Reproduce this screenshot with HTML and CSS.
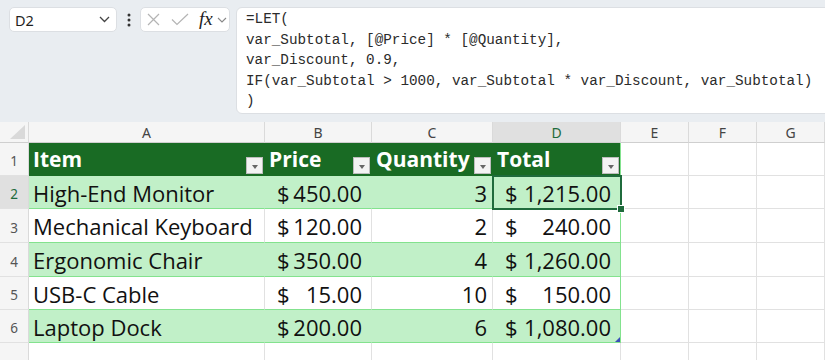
FILE: index.html
```html
<!DOCTYPE html>
<html>
<head>
<meta charset="utf-8">
<link rel="stylesheet" href="styles.css">
</head>
<body>
<div class="app">
  <div class="toolbar">
    <div class="namebox">
      <span class="nb-text">D2</span>
      <svg class="chev" width="11" height="7" viewBox="0 0 11 7"><polyline points="1,1 5.5,5.5 10,1" fill="none" stroke="#444" stroke-width="1.3"/></svg>
    </div>
    <div class="dots">
      <svg width="4" height="14" viewBox="0 0 4 14"><circle cx="2" cy="2" r="1.5" fill="#333"/><circle cx="2" cy="7" r="1.5" fill="#333"/><circle cx="2" cy="12" r="1.5" fill="#333"/></svg>
    </div>
    <div class="fxbox">
      <svg class="ic-x" width="13" height="13" viewBox="0 0 13 13"><path d="M1 1 L12 12 M12 1 L1 12" stroke="#b4b4b4" stroke-width="1.2" fill="none"/></svg>
      <svg class="ic-check" width="18" height="13" viewBox="0 0 18 13"><polyline points="1,6.5 6,11.5 17,1" fill="none" stroke="#b4b4b4" stroke-width="1.2"/></svg>
      <span class="fx">fx</span>
      <svg class="chev-s" width="10" height="6" viewBox="0 0 10 6"><polyline points="1,1 5,5 9,1" fill="none" stroke="#888" stroke-width="1.1"/></svg>
    </div>
    <div class="formula"><pre class="ftext">=LET(
var_Subtotal, [@Price] * [@Quantity],
var_Discount, 0.9,
IF(var_Subtotal &gt; 1000, var_Subtotal * var_Discount, var_Subtotal)
)</pre></div>
  </div>

  <div class="sheet">
    <div class="c corner"><svg width="15" height="14" viewBox="0 0 15 14"><polygon points="15,0 15,14 0,14" fill="#d9d9d9"/></svg></div>
    <div class="c ch">A</div>
    <div class="c ch">B</div>
    <div class="c ch">C</div>
    <div class="c ch sel">D</div>
    <div class="c ch">E</div>
    <div class="c ch">F</div>
    <div class="c ch">G</div>

    <div class="c rh">1</div>
    <div class="c th"><span>Item</span><span class="filter"><i></i></span></div>
    <div class="c th"><span>Price</span><span class="filter"><i></i></span></div>
    <div class="c th"><span>Quantity</span><span class="filter"><i></i></span></div>
    <div class="c th last"><span>Total</span><span class="filter"><i></i></span></div>
    <div class="c"></div>
    <div class="c"></div>
    <div class="c"></div>

    <div class="c rh sel">2</div>
    <div class="c td g">High-End Monitor</div>
    <div class="c td g acc"><span>$</span><span>450.00</span></div>
    <div class="c td g num">3</div>
    <div class="c td g acc last"><span>$</span><span>1,215.00</span></div>
    <div class="c"></div>
    <div class="c"></div>
    <div class="c"></div>

    <div class="c rh">3</div>
    <div class="c td">Mechanical Keyboard</div>
    <div class="c td acc"><span>$</span><span>120.00</span></div>
    <div class="c td num">2</div>
    <div class="c td acc last"><span>$</span><span>240.00</span></div>
    <div class="c"></div>
    <div class="c"></div>
    <div class="c"></div>

    <div class="c rh">4</div>
    <div class="c td g">Ergonomic Chair</div>
    <div class="c td g acc"><span>$</span><span>350.00</span></div>
    <div class="c td g num">4</div>
    <div class="c td g acc last"><span>$</span><span>1,260.00</span></div>
    <div class="c"></div>
    <div class="c"></div>
    <div class="c"></div>

    <div class="c rh">5</div>
    <div class="c td">USB-C Cable</div>
    <div class="c td acc"><span>$</span><span>15.00</span></div>
    <div class="c td num">10</div>
    <div class="c td acc last"><span>$</span><span>150.00</span></div>
    <div class="c"></div>
    <div class="c"></div>
    <div class="c"></div>

    <div class="c rh">6</div>
    <div class="c td g">Laptop Dock</div>
    <div class="c td g acc"><span>$</span><span>200.00</span></div>
    <div class="c td g num">6</div>
    <div class="c td g acc last"><span>$</span><span>1,080.00</span></div>
    <div class="c"></div>
    <div class="c"></div>
    <div class="c"></div>

    <div class="c rh r7">7</div>
    <div class="c"></div>
    <div class="c"></div>
    <div class="c"></div>
    <div class="c"></div>
    <div class="c"></div>
    <div class="c"></div>
    <div class="c"></div>

    <div class="selection"><span class="handle"></span></div>
    <div class="resize-mark"></div>
  </div>
</div>
</body>
</html>
```

FILE: styles.css
```css
html, body {
  margin: 0;
  padding: 0;
}
body {
  background: #e9edf1;
  font-family: "Noto Sans", "Liberation Sans", sans-serif;
  width: 825px;
  height: 360px;
  overflow: hidden;
}
.app {
  width: 825px;
  height: 360px;
  overflow: hidden;
}
.toolbar {
  display: flex;
  align-items: flex-start;
  padding: 7px 0 8px 9px;
}
.namebox {
  width: 108px;
  height: 25px;
  box-sizing: border-box;
  background: #fff;
  border: 1px solid #dcdfe3;
  border-radius: 5px;
  display: flex;
  align-items: center;
  justify-content: space-between;
  padding: 0 6px 0 5px;
}
.nb-text {
  font-size: 14.5px;
  color: #1f1f1f;
  font-family: "Noto Sans", sans-serif;
}
.dots {
  width: 23px;
  height: 25px;
  display: flex;
  align-items: center;
  justify-content: center;
}
.fxbox {
  width: 90px;
  height: 25px;
  box-sizing: border-box;
  background: #fff;
  border: 1px solid #dcdfe3;
  border-radius: 5px;
  display: flex;
  align-items: center;
  padding: 0 0 0 6px;
}
.ic-x { margin-right: 11px; }
.ic-check { margin-right: 10px; }
.fx {
  font-family: "Liberation Serif", serif;
  font-style: italic;
  font-size: 19px;
  color: #222;
  line-height: 1;
  margin-top: -2px;
  margin-right: 4px;
}
.formula {
  flex: 1;
  margin-left: 6px;
  margin-right: -10px;
  height: 107px;
  box-sizing: border-box;
  background: #fff;
  border: 1px solid #dcdfe3;
  border-radius: 6px;
  padding: 1px 0 0 9px;
}
.ftext {
  margin: 0;
  font-family: "Liberation Mono", "DejaVu Sans Mono", monospace;
  font-size: 14.3px;
  line-height: 20.6px;
  color: #2b2b2b;
}

.sheet {
  position: relative;
  display: grid;
  grid-template-columns: 29px 236px 107px 121px 128px 68px 68px 68px;
  grid-template-rows: 21px 33px 33px 34px 34px 33px 33px 40px;
  background: #fff;
}
.c {
  box-sizing: border-box;
  border-right: 1px solid #e1e1e1;
  border-bottom: 1px solid #e1e1e1;
  background: #fff;
}
.corner {
  background: #f5f5f5;
  border-bottom-color: #cfcfcf;
  border-right-color: #dadada;
  display: flex;
  align-items: flex-end;
  justify-content: flex-end;
  padding: 0 3px 3px 0;
}
.ch {
  background: #f5f5f5;
  border-right-color: #dadada;
  border-bottom-color: #cfcfcf;
  font-size: 14px;
  color: #444;
  display: flex;
  align-items: center;
  justify-content: center;
}
.ch.sel {
  background: #e0e0e0;
  color: #1e6b3c;
}
.rh {
  background: #f5f5f5;
  border-right-color: #dadada;
  font-size: 13.5px;
  color: #555;
  display: flex;
  align-items: center;
  justify-content: center;
  padding-top: 4px;
}
.rh.r7 {
  align-items: flex-start;
  padding-top: 14px;
}
.rh.sel {
  background: #e0e0e0;
  color: #1e6b3c;
}
.th {
  background: #196b24;
  border-right-color: #196b24;
  border-bottom-color: #196b24;
  color: #fff;
  font-family: "Open Sans", sans-serif;
  font-weight: 700;
  font-size: 21px;
  display: flex;
  justify-content: space-between;
  align-items: center;
  padding: 0 1px 0 4px;
}
.th.last {
  border-right-color: #83e28e;
}
.filter {
  align-self: flex-end;
  margin-bottom: 1px;
  width: 17px;
  height: 17px;
  box-sizing: border-box;
  background: #f3f3f3;
  border: 1px solid #bdbdbd;
  display: flex;
  align-items: center;
  justify-content: center;
}
.filter i {
  display: block;
  width: 0;
  height: 0;
  border-left: 3.5px solid transparent;
  border-right: 3.5px solid transparent;
  border-top: 4px solid #666;
  margin-top: 3px;
}
.td {
  font-family: "Open Sans", sans-serif;
  font-size: 22px;
  color: #111;
  border-bottom-color: #83e28e;
  display: flex;
  align-items: center;
  padding: 1px 4px 0 4px;
  white-space: nowrap;
}
.g {
  background: #c1f0c8;
  border-right-color: #c1f0c8;
}
.td.last {
  border-right-color: #83e28e;
}
.acc {
  justify-content: space-between;
  padding: 1px 9px 0 12px;
}
.num {
  justify-content: flex-end;
  padding-right: 5px;
}
.selection {
  position: absolute;
  left: 492px;
  top: 53px;
  width: 130px;
  height: 35px;
  box-sizing: border-box;
  border: 2px solid #1f6b3c;
}
.handle {
  position: absolute;
  right: -5px;
  bottom: -5px;
  width: 6px;
  height: 6px;
  background: #1f6b3c;
  border: 1px solid #fff;
}
.resize-mark {
  position: absolute;
  left: 615px;
  top: 215px;
  width: 0;
  height: 0;
  border-left: 5px solid transparent;
  border-bottom: 5px solid #3a4fb8;
}
```
